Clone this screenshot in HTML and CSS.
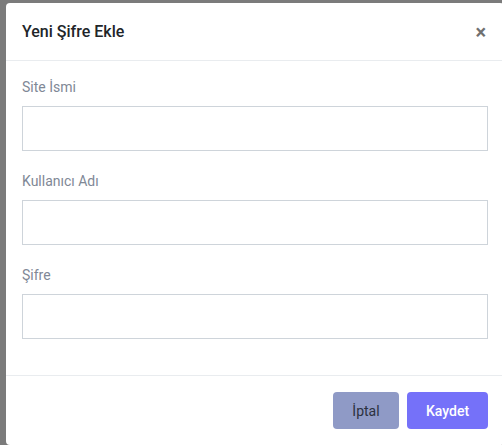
FILE: index.html
```html
<!DOCTYPE html>
<html lang="tr">
<head>
<meta charset="utf-8">
<title>Yeni Şifre Ekle</title>
<link rel="stylesheet" href="styles.css">
</head>
<body>
<div class="modal">
  <div class="modal-header">
    <h5 class="modal-title">Yeni Şifre Ekle</h5>
    <button class="close" type="button" aria-label="Kapat">&times;</button>
  </div>
  <div class="modal-body">
    <div class="form-group">
      <label class="form-label">Site İsmi</label>
      <input class="form-control" type="text">
    </div>
    <div class="form-group">
      <label class="form-label">Kullanıcı Adı</label>
      <input class="form-control" type="text">
    </div>
    <div class="form-group">
      <label class="form-label">Şifre</label>
      <input class="form-control" type="password">
    </div>
  </div>
  <div class="modal-footer">
    <button class="btn btn-cancel" type="button">İptal</button>
    <button class="btn btn-save" type="button">Kaydet</button>
  </div>
</div>
</body>
</html>
```

FILE: styles.css
```css
html, body {
  margin: 0;
  padding: 0;
  height: 100%;
  overflow: hidden;
}
body {
  background: #7b7b7b;
  font-family: Roboto, "Liberation Sans", sans-serif;
  padding: 3px 0 0 6px;
  box-sizing: border-box;
}
.modal {
  width: 498px;
  background: #fff;
  border-radius: 4px;
}
.modal-header {
  display: flex;
  align-items: center;
  justify-content: space-between;
  padding: 17px 16px 16px;
  border-bottom: 1px solid #e9ecef;
}
.modal-title {
  margin: 0;
  font-size: 16px;
  font-weight: 500;
  line-height: 24px;
  color: #212529;
}
.close {
  border: 0;
  background: none;
  padding: 0;
  font-family: Roboto, "Liberation Sans", sans-serif;
  font-size: 20px;
  font-weight: 700;
  line-height: 24px;
  color: #707070;
  margin-right: 2px;
}
.modal-body {
  padding: 16px 16px 16px;
}
.form-group {
  display: flex;
  flex-direction: column;
  margin-bottom: 20px;
}
.form-label {
  font-size: 14px;
  line-height: 21px;
  color: #808896;
  margin-bottom: 8px;
}
.form-control {
  box-sizing: border-box;
  width: 466px;
  height: 45px;
  margin: 0;
  border: 1px solid #ced4da;
  border-radius: 0;
  background: #fff;
  padding: 6px 12px;
  font-size: 14px;
}
.modal-footer {
  display: flex;
  justify-content: flex-end;
  gap: 8px;
  padding: 16px 16px 16px;
  border-top: 1px solid #e9ecef;
}
.btn {
  height: 37px;
  border: 0;
  border-radius: 4px;
  font-family: Roboto, "Liberation Sans", sans-serif;
  font-size: 14px;
  padding: 0;
}
.btn-cancel {
  width: 66px;
  background: #8f9ac6;
  color: #2b3140;
}
.btn-save {
  width: 81px;
  background: #7571f9;
  color: #fff;
  font-weight: 500;
}
```
